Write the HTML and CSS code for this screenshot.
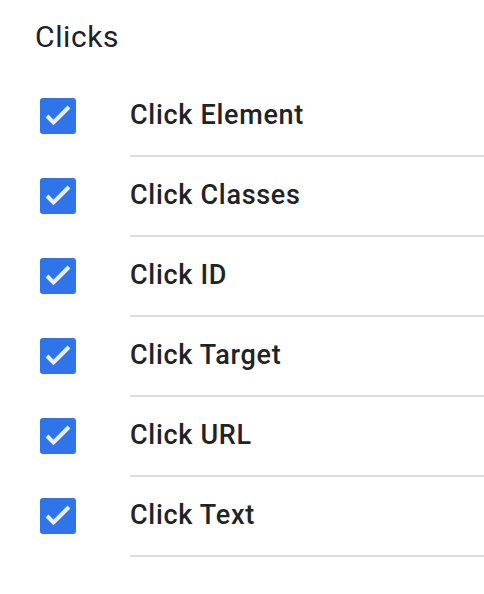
FILE: index.html
```html
<!DOCTYPE html>
<html lang="en">
<head>
    <meta charset="UTF-8">
    <title>Clicks</title>
    <link rel="stylesheet" href="styles.css">
</head>
<body>
    <div class="panel">
        <h1 class="panel-title">Clicks</h1>

        <ul class="var-list">
            <li class="var-row">
                <span class="check"><svg viewBox="0 0 36 36"><polyline points="7,18 13.5,24.5 29,9"/></svg></span>
                <span class="var-name">Click Element</span>
            </li>
            <li class="var-row">
                <span class="check"><svg viewBox="0 0 36 36"><polyline points="7,18 13.5,24.5 29,9"/></svg></span>
                <span class="var-name">Click Classes</span>
            </li>
            <li class="var-row">
                <span class="check"><svg viewBox="0 0 36 36"><polyline points="7,18 13.5,24.5 29,9"/></svg></span>
                <span class="var-name">Click ID</span>
            </li>
            <li class="var-row">
                <span class="check"><svg viewBox="0 0 36 36"><polyline points="7,18 13.5,24.5 29,9"/></svg></span>
                <span class="var-name">Click Target</span>
            </li>
            <li class="var-row">
                <span class="check"><svg viewBox="0 0 36 36"><polyline points="7,18 13.5,24.5 29,9"/></svg></span>
                <span class="var-name">Click URL</span>
            </li>
            <li class="var-row">
                <span class="check"><svg viewBox="0 0 36 36"><polyline points="7,18 13.5,24.5 29,9"/></svg></span>
                <span class="var-name">Click Text</span>
            </li>
        </ul>
    </div>
</body>
</html>
```

FILE: styles.css
```css
body {
    margin: 0;
    padding: 0;
    background-color: #ffffff;
    font-family: Roboto, "Liberation Sans", sans-serif;
    color: #202124;
}

.panel {
    padding-top: 17px;
}

.panel-title {
    margin: 0 0 0 35px;
    font-size: 30px;
    font-weight: 400;
    letter-spacing: 0.6px;
    line-height: 40px;
    color: #202124;
}

.var-list {
    list-style: none;
    margin: 20px 0 0 0;
    padding: 0;
}

.var-row {
    display: flex;
    align-items: flex-start;
}

.check {
    flex: none;
    width: 36px;
    height: 36px;
    margin: 21px 54px 0 40px;
    background-color: #2f74e8;
    border-radius: 3px;
}

.check svg {
    display: block;
    width: 36px;
    height: 36px;
}

.check polyline {
    fill: none;
    stroke: #eef1f6;
    stroke-width: 4;
}

.var-name {
    flex: 1;
    padding-top: 22px;
    box-sizing: border-box;
    height: 80px;
    border-bottom: 2px solid #dadce0;
    font-size: 27px;
    font-weight: 500;
    letter-spacing: 0.7px;
    line-height: 32px;
    color: #222326;
}
```
